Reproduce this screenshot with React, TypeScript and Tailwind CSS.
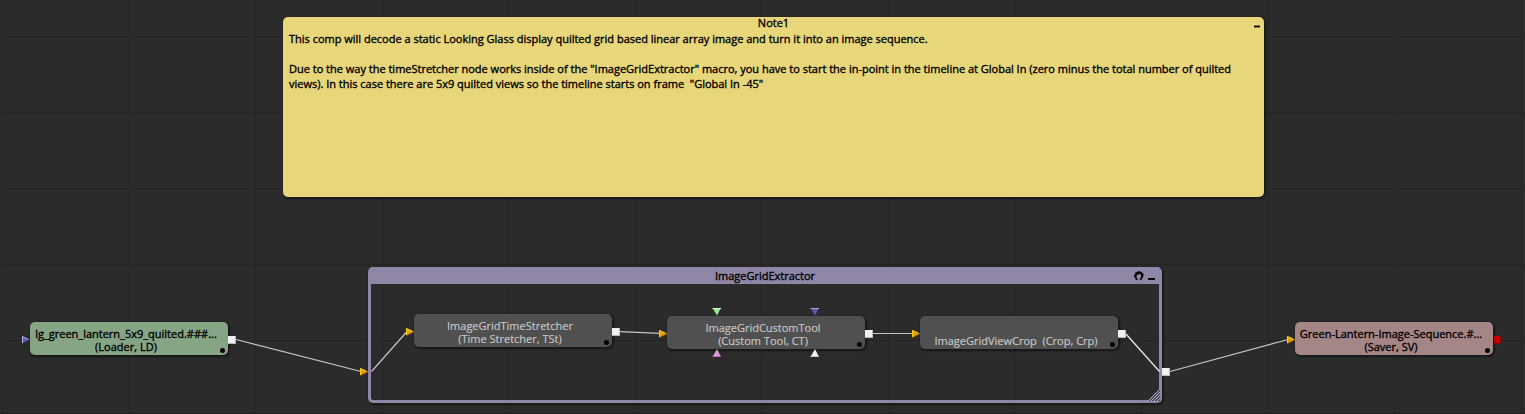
import type { ReactNode } from "react";

type Tone = "green" | "gray" | "rose";

const tones: Record<Tone, string> = {
  green: "bg-[#86a585] text-black [-webkit-text-stroke:0.35px_black]",
  gray: "bg-[#505050] text-[#c8c8c8] [-webkit-text-stroke:0.15px_#c8c8c8]",
  rose: "bg-[#a58686] text-black [-webkit-text-stroke:0.35px_black]",
};

interface NodeProps {
  place: string;
  tone: Tone;
  first: ReactNode;
  second: string;
}

function ToolNode({ place, tone, first, second }: NodeProps) {
  return (
    <div
      className={`absolute ${place} ${tones[tone]} h-[33px] w-[198px] rounded-[5px] pt-[5px] pr-[6px] text-center text-[11px] leading-[13px] whitespace-pre shadow-[1px_1px_2px_1px_rgba(0,0,0,0.45)]`}
    >
      <div className="flex h-[13px] justify-center"><span>{first}</span></div>
      <div className="flex h-[13px] justify-center"><span>{second}</span></div>
      <span className="absolute right-[3px] bottom-[2px] size-[5px] rounded-full bg-black" />
    </div>
  );
}

const verticals = [2, 129, 255, 382, 508, 635, 761, 888, 1014, 1141, 1268, 1394, 1521];
const horizontals = [36, 112, 188, 264, 340];

function Grid() {
  return (
    <svg className="absolute inset-0" width="1525" height="414" shapeRendering="crispEdges">
      {verticals.map((x) => (
        <rect key={x} x={x} y="0" width="1" height="414" fill="#242424" />
      ))}
      {horizontals.map((y) => (
        <rect key={y} x="0" y={y} width="1525" height="1" fill="#242424" />
      ))}
      <rect x="0" y="413" width="1525" height="1" fill="#1f1f1f" />
    </svg>
  );
}

const outputs = [
  [228, 336],
  [612, 328],
  [865, 330],
  [1118, 330],
  [1162, 368],
];

const inputs = [
  [406, 328],
  [659, 330],
  [912, 330],
  [360, 368],
  [1287, 336],
];

function Wires() {
  return (
    <svg className="absolute inset-0" width="1525" height="414">
      <g stroke="#c6c6c6" strokeWidth="1.2" fill="none">
        <path d="M236 339.5L361 371.5" />
        <path d="M371.5 371.5L407 331.5" />
        <path d="M620 331.7L660 333.3" />
        <path d="M873 333.5H913" />
        <path d="M1125.5 333.5L1159.5 371.5" stroke="#eeeeee" />
        <path d="M1170 371.5L1288 339.5" />
      </g>
      {outputs.map(([x, y]) => (
        <g key={`${x}-${y}`}>
          <rect x={x} y={y} width="8" height="8" fill="#b9b9b9" />
          <rect x={x} y={y} width="7" height="7" fill="#f1f1f1" />
        </g>
      ))}
      <rect x="1494" y="336" width="7" height="7" fill="#c40000" />
      <path d="M1494 343.5H1500.5V336" stroke="#7e0000" fill="none" />
      {inputs.map(([x, y]) => (
        <g key={`${x}-${y}`} transform={`translate(${x} ${y})`}>
          <path d="M0 0L8 3.5L0 7.5Z" fill="#e59f00" />
          <path d="M0.5 7V0.5L6 3" stroke="#ffcf18" fill="none" />
          <path d="M1 7.3L8 3.8" stroke="#a96800" strokeWidth="0.7" />
        </g>
      ))}
      <g transform="translate(22 336)">
        <path d="M0 0L7.5 3.5L0 7.5Z" fill="#5b5ba6" />
        <path d="M0.5 7V0.5L6.5 3.5" stroke="#a9a9ee" fill="none" />
      </g>
      <path d="M712.5 308H721L717 315.5Z" fill="#9be49b" />
      <path d="M712.5 308.5H721" stroke="#d2ffd2" />
      <path d="M810.5 308H819L815 315.5Z" fill="#5b5bae" />
      <path d="M810.5 308.5H819" stroke="#aaaaf0" strokeWidth="0.9" fill="none" />
      <path d="M712.5 357H721L717 349Z" fill="#dc9bdc" />
      <path d="M712.5 356.5H721" stroke="#b273b2" />
      <path d="M810.5 357H819L815 349Z" fill="#f1f1f1" />
      <path d="M810.5 356.5H819" stroke="#c2c2c2" />
    </svg>
  );
}

function Note() {
  return (
    <section className="absolute top-[17px] left-[283px] h-[180px] w-[981px] rounded-[5px] bg-[#e8d67b] text-[11px] text-black [-webkit-text-stroke:0.35px_black] shadow-[1px_1px_2px_1px_rgba(0,0,0,0.4)]">
      <h2 className="h-[14px] text-center leading-[12px]"><span>Note1</span></h2>
      <div className="pl-[6px] leading-[15px] tracking-[-0.006px] whitespace-pre">
        <p><span>This comp will decode a static Looking Glass display quilted grid based linear array image and turn it into an image sequence.</span></p>
        <p className="mt-[15px]"><span>Due to the way the timeStretcher node works inside of the "ImageGridExtractor" macro, you have to start the in-point in the timeline at Global In (zero minus the total number of quilted</span></p>
        <p><span>views). In this case there are 5x9 quilted views so the timeline starts on frame  "Global In -45"</span></p>
      </div>
      <span className="absolute top-[8px] right-[4px] h-[3px] w-[6px] border-y border-[#8a7f49] bg-black" />
    </section>
  );
}

function Group() {
  return (
    <section className="absolute top-[267px] left-[368px] h-[136px] w-[794px] rounded-[5px] border-x-3 border-b-3 border-[#9086a5] text-[11px] text-black shadow-[1px_1px_2px_1px_rgba(0,0,0,0.4)]">
      <h2 className="h-[17px] bg-[#9086a5] pt-px text-center leading-[15px] [-webkit-text-stroke:0.35px_black]"><span>ImageGridExtractor</span></h2>
      <svg className="absolute top-[3px] right-[14px]" width="13" height="12" viewBox="0 0 13 12">
        <path
          d="M5 10.3L3.6 9.4L3.2 8L1.8 6.6L2 5L3 4.6L3.2 2.6L4.4 2.4L5 1.4L6.4 1.6L7.6 1.1L8.6 1.9L9.8 1.8L10.4 3.2L11.6 4L11.6 6L10.6 7.6L9.6 9.6L8 10.4L7.6 9.4L8.6 8L9.2 6.2L8.8 4.6L7.6 4.1L6.6 4.4L5.4 4.2L4.9 5.6L4.4 6.6L5 8.2L5.8 9.4Z"
          fill="#000"
        />
      </svg>
      <span className="absolute top-[11px] right-[4px] h-[2px] w-[7px] bg-black" />
      <svg className="absolute -right-[1px] -bottom-[1px]" width="12" height="12" viewBox="0 0 12 12">
        <path d="M0 12L12 0V12Z" fill="#4d475b" />
        <path d="M0 12L12 0M3 12L12 3M6 12L12 6M9 12L12 9" stroke="#b4aacb" strokeWidth="1" />
      </svg>
    </section>
  );
}

export default function App() {
  return (
    <main className="relative h-[414px] w-[1525px] overflow-hidden bg-[#2b2b2b] font-['Open_Sans',sans-serif]">
      <Grid />
      <Note />
      <Group />
      <ToolNode place="top-[322px] left-[30px]" tone="green" first="lg_green_lantern_5x9_quilted.###..." second="(Loader, LD)" />
      <ToolNode place="top-[314px] left-[414px]" tone="gray" first="ImageGridTimeStretcher" second="(Time Stretcher, TSt)" />
      <ToolNode place="top-[316px] left-[667px]" tone="gray" first="ImageGridCustomTool" second="(Custom Tool, CT)" />
      <ToolNode place="top-[316px] left-[920px]" tone="gray" first=" " second="ImageGridViewCrop  (Crop, Crp)" />
      <ToolNode place="top-[322px] left-[1295px]" tone="rose" first="Green-Lantern-Image-Sequence.#..." second="(Saver, SV)" />
      <Wires />
    </main>
  );
}
